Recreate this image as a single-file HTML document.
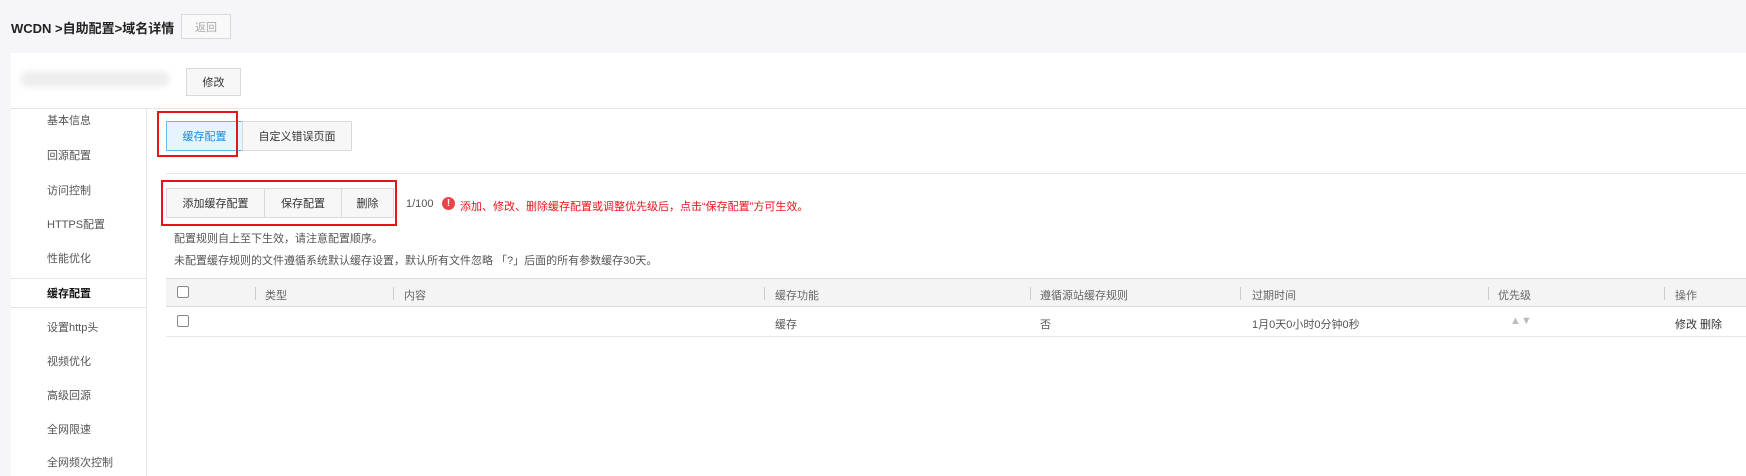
<!DOCTYPE html>
<html><head><meta charset="utf-8"><style>
*{margin:0;padding:0;box-sizing:border-box}
body{width:1746px;height:476px;background:#f6f6f8;font-family:"Liberation Sans","Noto Sans CJK SC",sans-serif;font-size:11px;color:#555;position:relative;overflow:hidden}
.a{position:absolute;white-space:nowrap}
.btn{position:absolute;border:1px solid #d9d9d9;background:#f7f7f7;color:#333;display:flex;align-items:center;justify-content:center;font-size:11px}
.red{position:absolute;border:2px solid #e8141c}
.side{position:absolute;left:47px;color:#555;font-size:11px}
.hd{position:absolute;top:287px;color:#666}
.sep{position:absolute;top:287px;width:1px;height:13px;background:#ccc}
.cb{position:absolute;width:12px;height:12px;border:1px solid #888;border-radius:2px;background:#fff}
</style></head><body>
<div class="a" style="left:11px;top:18px;font-size:13px;font-weight:bold;color:#222">WCDN &gt;自助配置&gt;域名详情</div>
<div class="btn" style="left:181px;top:14px;width:50px;height:25px;color:#aaa;background:#f9f9f9">返回</div>
<div class="a" style="left:11px;top:53px;width:1735px;height:423px;background:#fff"></div>
<div class="a" style="left:20px;top:71px;width:150px;height:16px;background:#eee;border-radius:8px;filter:blur(3px)"></div>
<div class="btn" style="left:186px;top:68px;width:55px;height:28px">修改</div>
<div class="a" style="left:11px;top:108px;width:1735px;height:1px;background:#e6e6e6"></div>
<div class="a" style="left:146px;top:108px;width:1px;height:368px;background:#e6e6e6"></div>
<div class="side" style="top:112px">基本信息</div>
<div class="side" style="top:147px">回源配置</div>
<div class="side" style="top:182px">访问控制</div>
<div class="side" style="top:216px">HTTPS配置</div>
<div class="side" style="top:250px">性能优化</div>
<div class="a" style="left:11px;top:278px;width:135px;height:1px;background:#e6e6e6"></div>
<div class="side" style="top:285px;color:#111;font-weight:bold">缓存配置</div>
<div class="a" style="left:11px;top:307px;width:135px;height:1px;background:#e6e6e6"></div>
<div class="side" style="top:319px">设置http头</div>
<div class="side" style="top:353px">视频优化</div>
<div class="side" style="top:387px">高级回源</div>
<div class="side" style="top:421px">全网限速</div>
<div class="side" style="top:454px">全网频次控制</div>
<div class="btn" style="left:166px;top:121px;width:77px;height:30px;background:#e6f4fd;border-color:#6bb8ea;color:#1a8de0">缓存配置</div>
<div class="btn" style="left:242px;top:121px;width:110px;height:30px">自定义错误页面</div>
<div class="red" style="left:157px;top:111px;width:81px;height:46px"></div>
<div class="a" style="left:166px;top:173px;width:1580px;height:1px;background:#e6e6e6"></div>
<div class="btn" style="left:166px;top:188px;width:99px;height:30px">添加缓存配置</div>
<div class="btn" style="left:264px;top:188px;width:78px;height:30px">保存配置</div>
<div class="btn" style="left:341px;top:188px;width:53px;height:30px">删除</div>
<div class="red" style="left:161px;top:180px;width:236px;height:46px"></div>
<div class="a" style="left:406px;top:198px;color:#555">1/100</div>
<div class="a" style="left:442px;top:197px;width:13px;height:13px;border-radius:50%;background:#e8454a;color:#fff;font-size:10px;font-weight:bold;text-align:center;line-height:13px">!</div>
<div class="a" style="left:460px;top:198px;color:#e8141c">添加、修改、删除缓存配置或调整优先级后，点击“保存配置”方可生效。</div>
<div class="a" style="left:174px;top:230px;color:#555">配置规则自上至下生效，请注意配置顺序。</div>
<div class="a" style="left:174px;top:252px;color:#555">未配置缓存规则的文件遵循系统默认缓存设置，默认所有文件忽略 「?」后面的所有参数缓存30天。</div>
<div class="a" style="left:166px;top:278px;width:1580px;height:29px;background:#f4f4f4;border-top:1px solid #ddd;border-bottom:1px solid #ddd"></div>
<div class="cb" style="left:177px;top:286px"></div>
<div class="sep" style="left:255px"></div><div class="hd" style="left:265px">类型</div>
<div class="sep" style="left:393px"></div><div class="hd" style="left:404px">内容</div>
<div class="sep" style="left:764px"></div><div class="hd" style="left:775px">缓存功能</div>
<div class="sep" style="left:1030px"></div><div class="hd" style="left:1040px">遵循源站缓存规则</div>
<div class="sep" style="left:1240px"></div><div class="hd" style="left:1252px">过期时间</div>
<div class="sep" style="left:1488px"></div><div class="hd" style="left:1498px">优先级</div>
<div class="sep" style="left:1664px"></div><div class="hd" style="left:1675px">操作</div>
<div class="cb" style="left:177px;top:315px"></div>
<div class="a" style="left:775px;top:316px">缓存</div>
<div class="a" style="left:1040px;top:316px">否</div>
<div class="a" style="left:1252px;top:316px">1月0天0小时0分钟0秒</div>
<div class="a" style="left:1510px;top:315px;color:#bbb;font-size:11px">▲▼</div>
<div class="a" style="left:1675px;top:316px;color:#333">修改 删除</div>
<div class="a" style="left:166px;top:336px;width:1580px;height:1px;background:#e8e8e8"></div>
</body></html>
